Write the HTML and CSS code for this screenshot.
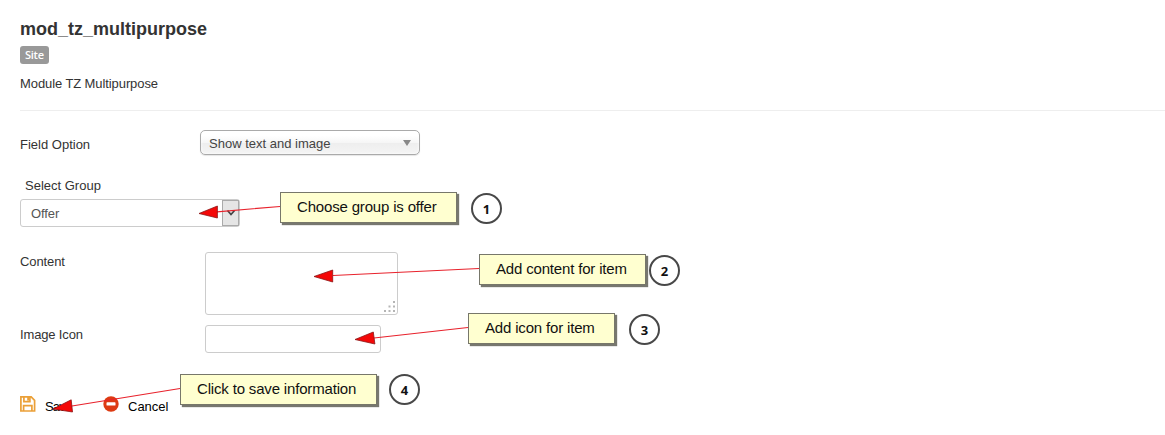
FILE: index.html
```html
<!DOCTYPE html>
<html lang="en">
<head>
<meta charset="utf-8">
<title>mod_tz_multipurpose</title>
<link rel="stylesheet" href="styles.css">
</head>
<body>
<main class="module">
  <h1 class="title">mod_tz_multipurpose</h1>
  <span class="badge">Site</span>
  <p class="description">Module TZ Multipurpose</p>
  <hr class="rule">
  <div class="row option-row">
    <span class="label">Field Option</span>
    <div class="chosen"><span>Show text and image</span><i class="caret"></i></div>
  </div>
  <div class="group">
    <span class="group-label">Select Group</span>
    <div class="select"><span class="select-value">Offer</span><span class="select-button"><svg width="10" height="8" viewBox="0 0 10 8"><path d="M1.5 1.5 5 5.5 8.500 1.500" fill="none" stroke="#444" stroke-width="1.800"/></svg></span></div>
  </div>
  <div class="row content-row">
    <span class="label">Content</span>
    <div class="textarea"><svg class="grip" width="12" height="12" viewBox="0 0 12 12"><path d="M9 0h2v2H9zM4.500 4.500h2v2h-2zM9 4.500h2v2H9zM0 9h2v2H0zM4.500 9h2v2h-2zM9 9h2v2H9z" fill="#b5b5b5"/></svg></div>
  </div>
  <div class="row image-row">
    <span class="label">Image Icon</span>
    <div class="input"></div>
  </div>
  <div class="actions">
    <span class="action save"><svg width="16" height="16" viewBox="0 0 16 16" fill="none" stroke="#eba038" stroke-width="1.700"><path d="M.9.900h10.300L14.600 4.300V15H.9zM3.900 1v4.700h6V1M3.600 15V9.600h8.300V15"/><path d="M8.200 1v3.600" stroke-width="2"/></svg><span>Save</span></span>
    <span class="action cancel"><svg width="16" height="16" viewBox="0 0 16 16"><circle cx="8" cy="8" r="7.700" fill="#dd3a12"/><rect x="3.500" y="6.300" width="9" height="3.300" rx=".7" fill="#fff"/></svg><span>Cancel</span></span>
  </div>
</main>
<svg class="arrows" width="1165" height="435" viewBox="0 0 1165 435">
  <g fill="none" stroke="#e8222c" stroke-width="1.200"><path d="M280 206.500 217 211.800M479 268.500 333 275.500M468 327.500 374 338M180 388.500 72 406"/></g>
  <g fill="#f40808" stroke="#8c1515" stroke-width=".8"><path d="M199 213.500 217.400 206V218zM314 276.500 332.700 270V282zM355 339.500 373.300 332 374.900 344zM53 409 71.200 399.800 72.500 412z"/></g>
</svg>
<div class="note note-1">Choose group is offer</div><div class="step step-1">1</div>
<div class="note note-2">Add content for item</div><div class="step step-2">2</div>
<div class="note note-3">Add icon for item</div><div class="step step-3">3</div>
<div class="note note-4">Click to save information</div><div class="step step-4">4</div>
</body>
</html>
```
FILE: styles.css
```css
* { box-sizing: border-box; }
body {
  position: relative;
  width: 1165px;
  height: 435px;
  margin: 0;
  overflow: hidden;
  background: #fff;
  color: #333;
  font: 13px/18px "Liberation Sans", Arial, sans-serif;
}
svg { display: block; }
.module { display: flex; flex-direction: column; padding: 19px 0 0 20px; }
.title { margin: 0; font-size: 18px; line-height: 20px; }
.badge {
  align-self: flex-start;
  height: 18px;
  margin-top: 7px;
  padding: 0 5px;
  border-radius: 3px;
  background: #999;
  color: #fff;
  font: 600 11px/18px "Open Sans", sans-serif;
  letter-spacing: -.25px;
}
.description { margin: 11px 0 0; letter-spacing: -.09px; }
.rule { width: 100%; margin: 17px 0 0; border: 0; border-top: 1px solid #eee; }
.row { display: flex; }
.label { width: 185px; }
.option-row { margin-top: 19px; }
.option-row .label { width: 180px; padding-top: 6px; }
.chosen {
  display: flex;
  align-items: center;
  justify-content: space-between;
  width: 220px;
  height: 25px;
  padding: 0 8px;
  border: 1px solid #aaa;
  border-radius: 5px;
  background: linear-gradient(#fff 20%, #f6f6f6 50%, #eee 52%, #f4f4f4);
  box-shadow: 0 0 3px #fff inset, 0 1px 1px rgba(0, 0, 0, .1);
  color: #444;
}
.chosen span { padding-top: 2px; }
.caret { border: 4px solid transparent; border-top: 6px solid #888; border-bottom: 0; }
.group { margin-top: 21px; }
.group-label { display: block; padding: 1px 0 0 5px; }
.select {
  display: flex;
  width: 220px;
  height: 28px;
  margin-top: 4px;
  border: 1px solid #ccc;
  border-radius: 3px;
  color: #555;
}
.select-value { flex: 1; padding: 5px 10px; letter-spacing: -.1px; }
.select-button {
  display: flex;
  align-items: center;
  justify-content: center;
  width: 17px;
  border: 1px solid #aaa;
  background: #e5e5e5;
}
.content-row { margin-top: 25px; }
.content-row .label { padding-top: 1px; letter-spacing: -.1px; }
.textarea, .input { border: 1px solid #ccc; border-radius: 3px; }
.textarea {
  display: flex;
  align-items: flex-end;
  justify-content: flex-end;
  width: 193px;
  height: 63px;
  padding: 1px;
}
.image-row { margin-top: 10px; }
.image-row .label { padding-top: 1px; letter-spacing: -.15px; }
.input { width: 176px; height: 28px; }
.actions { display: flex; margin-top: 43px; color: #000; }
.action { display: flex; gap: 9px; }
.action span { padding-top: 2px; }
.save { width: 83px; }
.save span { letter-spacing: -.8px; }
.arrows { position: absolute; top: 0; left: 0; }
.note {
  position: absolute;
  height: 31px;
  padding-left: 16px;
  border: 1px solid #77776a;
  background: #ffffd0;
  box-shadow: 2px 2px 1px #77776f;
  color: #111;
  font-size: 15px;
  letter-spacing: -.17px;
  line-height: 28px;
  white-space: nowrap;
}
.note-1 { left: 280px; top: 192px; width: 177px; }
.note-2 { left: 479px; top: 254px; width: 167px; }
.note-3 { left: 468px; top: 313px; width: 147px; }
.note-4 { left: 180px; top: 374px; width: 197px; }
.step {
  position: absolute;
  width: 31px;
  height: 31px;
  border: 2px solid #484848;
  border-radius: 50%;
  color: #111;
  font: bold 13px/28px "Open Sans", sans-serif;
  text-align: center;
}
.step-1 { left: 471px; top: 193px; }
.step-2 { left: 649px; top: 255px; }
.step-3 { left: 629px; top: 314px; }
.step-4 { left: 389px; top: 374px; }
```
